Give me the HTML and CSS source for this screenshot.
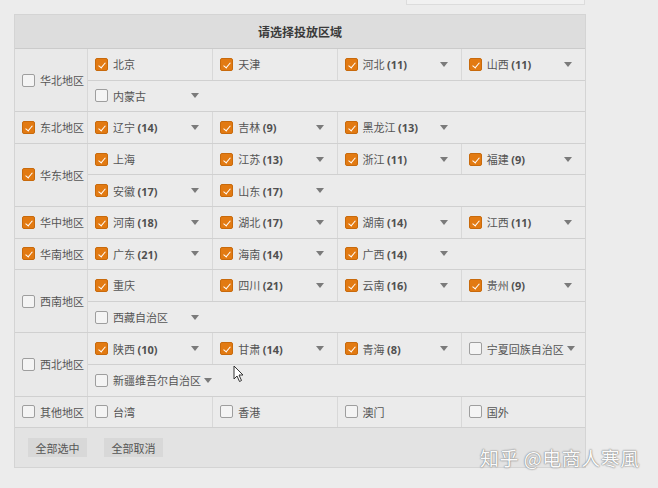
FILE: index.html
```html
<!DOCTYPE html>
<html lang="zh-CN">
<head>
    <meta charset="UTF-8">
    <title>请选择投放区域</title>
    <link rel="stylesheet" href="styles.css">
</head>
<body>
    <div class="topbox"></div>
    <div class="panel">
        <div class="panel-head">请选择投放区域</div>

        <div class="region">
            <div class="region-name"><span class="cb"></span>华北地区</div>
            <div class="subrows">
                <div class="subrow">
                    <div class="cell"><span class="cb on"></span><span class="lbl">北京</span></div>
                    <div class="cell"><span class="cb on"></span><span class="lbl">天津</span></div>
                    <div class="cell"><span class="cb on"></span><span class="lbl">河北 <b>(11)</b></span><i class="arrow"></i></div>
                    <div class="cell"><span class="cb on"></span><span class="lbl">山西 <b>(11)</b></span><i class="arrow"></i></div>
                </div>
                <div class="subrow">
                    <div class="cell"><span class="cb"></span><span class="lbl">内蒙古</span><i class="arrow"></i></div>
                </div>
            </div>
        </div>

        <div class="region">
            <div class="region-name"><span class="cb on"></span>东北地区</div>
            <div class="subrows">
                <div class="subrow">
                    <div class="cell"><span class="cb on"></span><span class="lbl">辽宁 <b>(14)</b></span><i class="arrow"></i></div>
                    <div class="cell"><span class="cb on"></span><span class="lbl">吉林 <b>(9)</b></span><i class="arrow"></i></div>
                    <div class="cell"><span class="cb on"></span><span class="lbl">黑龙江 <b>(13)</b></span><i class="arrow"></i></div>
                </div>
            </div>
        </div>

        <div class="region">
            <div class="region-name"><span class="cb on"></span>华东地区</div>
            <div class="subrows">
                <div class="subrow">
                    <div class="cell"><span class="cb on"></span><span class="lbl">上海</span></div>
                    <div class="cell"><span class="cb on"></span><span class="lbl">江苏 <b>(13)</b></span><i class="arrow"></i></div>
                    <div class="cell"><span class="cb on"></span><span class="lbl">浙江 <b>(11)</b></span><i class="arrow"></i></div>
                    <div class="cell"><span class="cb on"></span><span class="lbl">福建 <b>(9)</b></span><i class="arrow"></i></div>
                </div>
                <div class="subrow">
                    <div class="cell"><span class="cb on"></span><span class="lbl">安徽 <b>(17)</b></span><i class="arrow"></i></div>
                    <div class="cell"><span class="cb on"></span><span class="lbl">山东 <b>(17)</b></span><i class="arrow"></i></div>
                </div>
            </div>
        </div>

        <div class="region">
            <div class="region-name"><span class="cb on"></span>华中地区</div>
            <div class="subrows">
                <div class="subrow">
                    <div class="cell"><span class="cb on"></span><span class="lbl">河南 <b>(18)</b></span><i class="arrow"></i></div>
                    <div class="cell"><span class="cb on"></span><span class="lbl">湖北 <b>(17)</b></span><i class="arrow"></i></div>
                    <div class="cell"><span class="cb on"></span><span class="lbl">湖南 <b>(14)</b></span><i class="arrow"></i></div>
                    <div class="cell"><span class="cb on"></span><span class="lbl">江西 <b>(11)</b></span><i class="arrow"></i></div>
                </div>
            </div>
        </div>

        <div class="region">
            <div class="region-name"><span class="cb on"></span>华南地区</div>
            <div class="subrows">
                <div class="subrow">
                    <div class="cell"><span class="cb on"></span><span class="lbl">广东 <b>(21)</b></span><i class="arrow"></i></div>
                    <div class="cell"><span class="cb on"></span><span class="lbl">海南 <b>(14)</b></span><i class="arrow"></i></div>
                    <div class="cell"><span class="cb on"></span><span class="lbl">广西 <b>(14)</b></span><i class="arrow"></i></div>
                </div>
            </div>
        </div>

        <div class="region">
            <div class="region-name"><span class="cb"></span>西南地区</div>
            <div class="subrows">
                <div class="subrow">
                    <div class="cell"><span class="cb on"></span><span class="lbl">重庆</span></div>
                    <div class="cell"><span class="cb on"></span><span class="lbl">四川 <b>(21)</b></span><i class="arrow"></i></div>
                    <div class="cell"><span class="cb on"></span><span class="lbl">云南 <b>(16)</b></span><i class="arrow"></i></div>
                    <div class="cell"><span class="cb on"></span><span class="lbl">贵州 <b>(9)</b></span><i class="arrow"></i></div>
                </div>
                <div class="subrow">
                    <div class="cell"><span class="cb"></span><span class="lbl">西藏自治区</span><i class="arrow"></i></div>
                </div>
            </div>
        </div>

        <div class="region">
            <div class="region-name"><span class="cb"></span>西北地区</div>
            <div class="subrows">
                <div class="subrow">
                    <div class="cell"><span class="cb on"></span><span class="lbl">陕西 <b>(10)</b></span><i class="arrow"></i></div>
                    <div class="cell"><span class="cb on"></span><span class="lbl">甘肃 <b>(14)</b></span><i class="arrow"></i></div>
                    <div class="cell"><span class="cb on"></span><span class="lbl">青海 <b>(8)</b></span><i class="arrow"></i></div>
                    <div class="cell"><span class="cb"></span><span class="lbl">宁夏回族自治区</span><i class="arrow"></i></div>
                </div>
                <div class="subrow">
                    <div class="cell"><span class="cb"></span><span class="lbl">新疆维吾尔自治区</span><i class="arrow"></i></div>
                </div>
            </div>
        </div>

        <div class="region">
            <div class="region-name"><span class="cb"></span>其他地区</div>
            <div class="subrows">
                <div class="subrow">
                    <div class="cell"><span class="cb"></span><span class="lbl">台湾</span></div>
                    <div class="cell"><span class="cb"></span><span class="lbl">香港</span></div>
                    <div class="cell"><span class="cb"></span><span class="lbl">澳门</span></div>
                    <div class="cell"><span class="cb"></span><span class="lbl">国外</span></div>
                </div>
            </div>
        </div>

        <div class="actions">
            <button class="btn">全部选中</button>
            <button class="btn">全部取消</button>
        </div>
    </div>

    <svg class="cursor" width="12" height="18" viewBox="0 0 12 18">
        <path d="M1 1 L1 14 L4 11 L6.5 16.5 L8.5 15.5 L6 10 L10 10 Z" fill="#fff" stroke="#333" stroke-width="1"/>
    </svg>

    <div class="watermark">知乎 @电商人寒風</div>
</body>
</html>
```

FILE: styles.css
```css
body {
    margin: 0;
    padding: 0;
    background: #ececec;
    font-family: "Noto Sans CJK SC", sans-serif;
    font-size: 11px;
    color: #555;
    position: relative;
    height: 488px;
    overflow: hidden;
}
.topbox {
    width: 177px;
    height: 4px;
    margin-left: 406px;
    background: #f1f1f1;
    border: 1px solid #dcdcdc;
    border-top: none;
}
.panel {
    width: 572px;
    margin: 9px 0 0 14px;
    background: #e9e9e9;
    border: 1px solid #d4d4d4;
    box-sizing: border-box;
}
.panel-head {
    height: 33px;
    line-height: 33px;
    text-align: center;
    font-weight: bold;
    font-size: 12px;
    color: #3a3a3a;
    background: #dddddd;
    border-bottom: 1px solid #cbcbcb;
}
.region {
    display: flex;
    border-bottom: 1px solid #d0d0d0;
}
.region-name {
    width: 73px;
    flex: 0 0 73px;
    display: flex;
    align-items: center;
    padding-left: 7px;
    box-sizing: border-box;
    border-right: 1px solid #d8d8d8;
    white-space: nowrap;
}
.subrows {
    flex: 1;
}
.subrow {
    display: flex;
    height: 31.6px;
    box-sizing: border-box;
    border-bottom: 1px solid #d0d0d0;
    background: #ebebeb;
}
.subrow:last-child {
    border-bottom: none;
    height: 30.6px;
}
.cell {
    width: 25%;
    flex: 0 0 25%;
    display: flex;
    align-items: center;
    padding: 0 13px 0 7px;
    box-sizing: border-box;
    white-space: nowrap;
}
.cell + .cell {
    border-left: 1px solid #d8d8d8;
}
.lbl {
    flex: 1;
}
.lbl b {
    font-family: "Open Sans", sans-serif;
    color: #505050;
}
.cb {
    display: inline-block;
    width: 13px;
    height: 13px;
    flex: 0 0 13px;
    box-sizing: border-box;
    border: 1px solid #9e9e9e;
    border-radius: 2px;
    background: #f4f4f4;
    margin-right: 5px;
    position: relative;
}
.cb.on {
    background: #e27a12;
    border-color: #c86a0c;
}
.cb.on::after {
    content: "";
    position: absolute;
    left: 4px;
    top: 2px;
    width: 3px;
    height: 6px;
    border: solid #fff;
    border-width: 0 1.5px 1.5px 0;
    transform: rotate(40deg);
}
.arrow {
    width: 0;
    height: 0;
    border-left: 4px solid transparent;
    border-right: 4px solid transparent;
    border-top: 5px solid #7a7a7a;
    margin-left: 3px;
}
.actions {
    height: 39px;
    display: flex;
    align-items: center;
    gap: 17px;
    padding-left: 13px;
    background: #e3e3e3;
}
.btn {
    font-family: "Noto Sans CJK SC", sans-serif;
    font-size: 11px;
    color: #555;
    background: #d8d8d8;
    border: none;
    height: 19px;
    width: 59px;
    padding: 0;
}
.cursor {
    position: absolute;
    left: 233px;
    top: 365px;
}
.watermark {
    position: absolute;
    left: 480px;
    top: 444px;
    font-size: 19px;
    color: #fafafa;
    text-shadow: 0 0 2px #888, 0 0 1px #666;
    letter-spacing: 0.5px;
}
```
